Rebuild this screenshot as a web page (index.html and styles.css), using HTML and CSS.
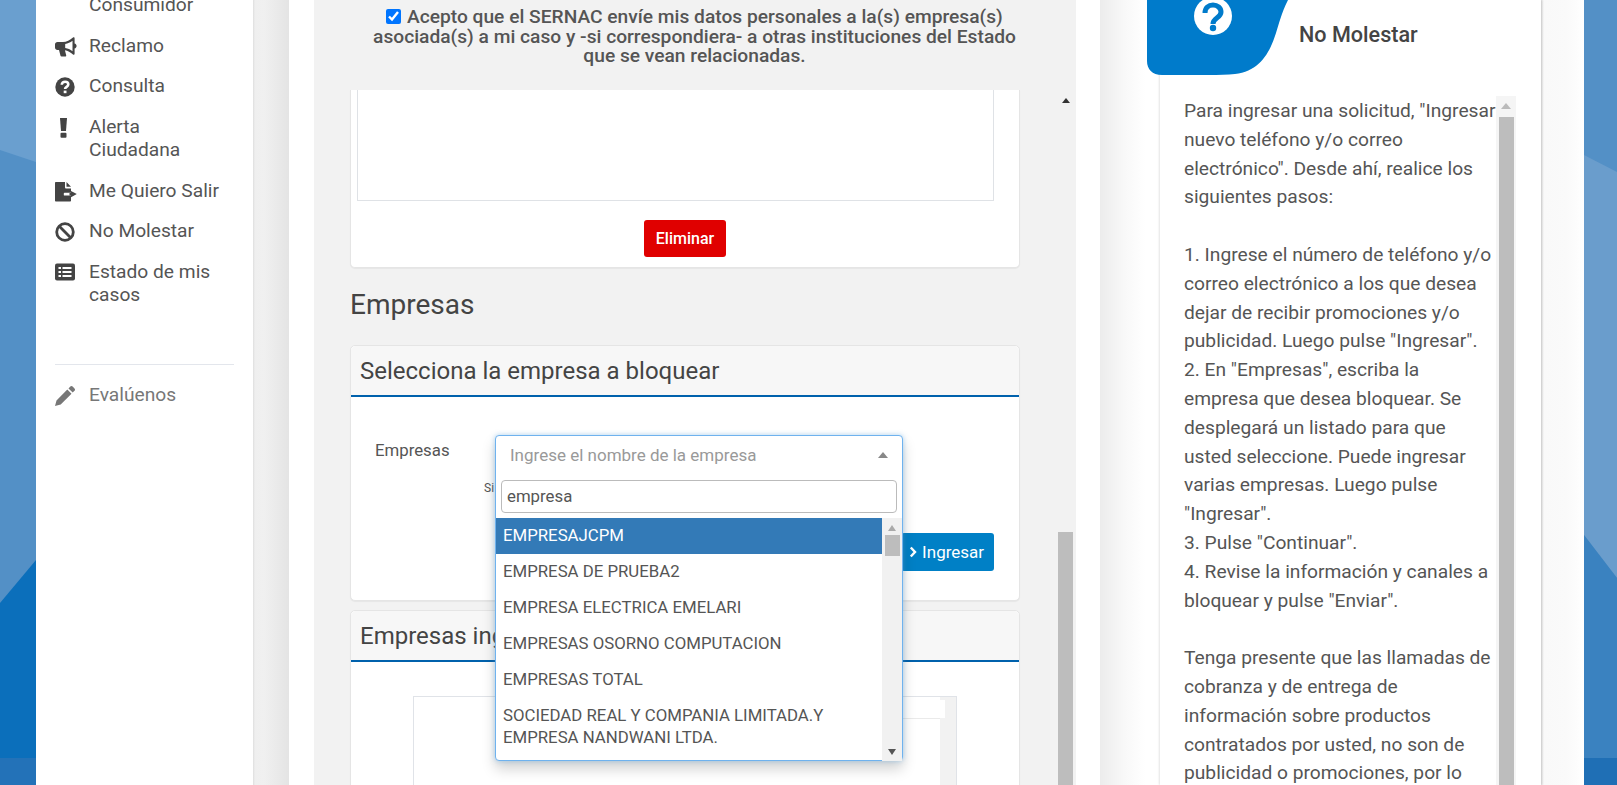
FILE: index.html
```html
<!DOCTYPE html>
<html lang="es">
<head>
<meta charset="utf-8">
<title>No Molestar</title>
<link rel="stylesheet" href="styles.css">
</head>
<body>
<div class="page">
  <div class="edge edge-left">
    <svg viewBox="0 0 36 785" preserveAspectRatio="none" aria-hidden="true">
      <rect width="36" height="785" fill="#5390c6"/>
      <polygon points="0,0 36,0 36,162 0,150" fill="#6a9fcf"/>
      <polygon points="0,603 36,560 36,758 0,758" fill="#0b6fbb"/>
      <rect y="758" width="36" height="27" fill="#2372b8"/>
    </svg>
  </div>

  <nav class="sidebar">
    <ul class="menu">
      <li class="menu-item"><span class="menu-icon"></span><span>Consumidor</span></li>
      <li class="menu-item">
        <span class="menu-icon"><svg width="23" height="20" viewBox="0 0 23 20"><path fill="#444" d="M0 7.5C0 6 1 5 2.5 5H8c3.5 0 7-1.8 10-4.5.6-.5 1.600-.2 1.600.7v5.300c1.200.3 2 1.300 2 2.500s-.8 2.200-2 2.500v5.300c0 .9-1 1.200-1.600.7-2.500-2.300-5.300-3.800-8.100-4.300l1.300 5c.2.700-.3 1.300-1 1.300H6.500c-.5 0-.9-.3-1-.8L4 13H2.500C1 13 0 12 0 10.500zM17.500 3.800C15.300 5.500 12.800 6.600 10.200 7v4c2.600.4 5.100 1.500 7.300 3.200z"/></svg></span>
        <span>Reclamo</span>
      </li>
      <li class="menu-item">
        <span class="menu-icon"><svg width="20" height="20" viewBox="0 0 20 20"><circle cx="10" cy="10" r="9.700" fill="#444"/><path fill="none" stroke="#fff" stroke-width="2.600" d="M6.800 7.800c0-1.900 1.400-3 3.300-3s3.200 1.100 3.200 2.700c0 2.400-3.200 2.300-3.200 4.500"/><rect x="8.700" y="13.600" width="2.800" height="2.600" fill="#fff"/></svg></span>
        <span>Consulta</span>
      </li>
      <li class="menu-item">
        <span class="menu-icon"><svg width="20" height="20" viewBox="0 0 20 20"><path fill="#444" d="M5 0h7l-1 13H6z"/><rect x="5.500" y="14.800" width="6" height="5" rx="1" fill="#444"/></svg></span>
        <span>Alerta<br>Ciudadana</span>
      </li>
      <li class="menu-item">
        <span class="menu-icon"><svg width="23" height="20" viewBox="0 0 23 20"><path fill="#444" d="M0 .8C0 .3.3 0 .8 0H10v5.500c0 .5.400.9.900.9h5.100v4.300H9.500c-.4 0-.7.300-.7.700v1.500c0 .4.300.7.700.7H16v5.100c0 .5-.3.800-.8.800H.8c-.5 0-.8-.3-.8-.8zM11.500 0l4.500 4.800h-4.500zM16 9l5.800 3-5.800 3.200v-2h-1.500v-2.200H16z"/></svg></span>
        <span>Me Quiero Salir</span>
      </li>
      <li class="menu-item">
        <span class="menu-icon"><svg width="20" height="20" viewBox="0 0 20 20"><circle cx="10" cy="10" r="8.300" fill="none" stroke="#444" stroke-width="2.800"/><path stroke="#444" stroke-width="2.800" d="M4.300 4.300l11.400 11.400"/></svg></span>
        <span>No Molestar</span>
      </li>
      <li class="menu-item">
        <span class="menu-icon"><svg width="20" height="18" viewBox="0 0 20 18"><rect y=".5" width="20" height="17" rx="2" fill="#444"/><path stroke="#fff" stroke-width="2" d="M3.500 5h2.500M7.500 5h9M3.500 9h2.500M7.500 9h9M3.500 13h2.500M7.500 13h9"/></svg></span>
        <span>Estado de mis<br>casos</span>
      </li>
    </ul>
    <hr class="menu-rule">
    <div class="menu-item menu-item-muted">
      <span class="menu-icon"><svg width="20" height="20" viewBox="0 0 20 20"><path fill="#777" d="M0 20l1.500-5.600L12.300 3.600l4.200 4.200L5.700 18.500zM13.500 2.400L15.300.6c.7-.7 1.700-.7 2.300 0l1.900 1.900c.7.700.7 1.700 0 2.300l-1.800 1.800z"/></svg></span>
      <span>Evalúenos</span>
    </div>
  </nav>

  <div class="gutter gutter-left"></div>

  <main class="main">
    <div class="column">
      <header class="consent">
        <label class="consent-text"><input type="checkbox" class="consent-box" checked> Acepto que el SERNAC envíe mis datos personales a la(s) empresa(s) asociada(s) a mi caso y -si correspondiera- a otras instituciones del Estado que se vean relacionadas.</label>
      </header>
      <div class="scroller">
        <div class="content">
          <section class="file-card">
            <div class="file-box"></div>
            <div class="file-actions"><button class="btn btn-red" type="button">Eliminar</button></div>
          </section>

          <h2 class="section-title">Empresas</h2>

          <section class="panel panel-select">
            <h3 class="panel-head">Selecciona la empresa a bloquear</h3>
            <div class="panel-body">
              <div class="form-row">
                <span class="form-label">Empresas</span>
              </div>
              <span class="hint">Si</span>
              <div class="form-actions">
                <button class="btn btn-blue" type="button"><svg width="9" height="12" viewBox="0 0 9 12"><path fill="none" stroke="#fff" stroke-width="2.400" d="M1.800 1.500L6 6l-4.200 4.500"/></svg> Ingresar</button>
              </div>
              <div class="combo">
                <div class="combo-head">
                  <span>Ingrese el nombre de la empresa</span>
                  <i class="caret caret-up"></i>
                </div>
                <div class="combo-search"><input class="combo-input" type="text" value="empresa"></div>
                <div class="combo-list">
                  <ul class="options">
                    <li class="option option-active">EMPRESAJCPM</li>
                    <li class="option">EMPRESA DE PRUEBA2</li>
                    <li class="option">EMPRESA ELECTRICA EMELARI</li>
                    <li class="option">EMPRESAS OSORNO COMPUTACION</li>
                    <li class="option">EMPRESAS TOTAL</li>
                    <li class="option">SOCIEDAD REAL Y COMPANIA LIMITADA.Y EMPRESA NANDWANI LTDA.</li>
                  </ul>
                  <div class="combo-scroll">
                    <i class="caret caret-up caret-small"></i>
                    <i class="combo-thumb"></i>
                    <i class="caret caret-down caret-small"></i>
                  </div>
                </div>
              </div>
            </div>
          </section>

          <section class="panel panel-added">
            <h3 class="panel-head">Empresas ingresadas</h3>
            <div class="panel-body panel-body-added">
              <div class="table-box">
                <div class="table-main"><div class="table-top"></div></div>
                <div class="table-side"><span class="table-tab"></span></div>
              </div>
            </div>
          </section>
        </div>
        <div class="main-scroll">
          <i class="caret caret-up caret-dark"></i>
          <i class="main-thumb"></i>
        </div>
      </div>
    </div>
  </main>

  <div class="gutter gutter-right"></div>

  <aside class="help">
    <div class="help-head">
      <svg class="help-tab" width="141" height="75" viewBox="0 0 141 75" aria-hidden="true">
        <path fill="#007bcb" d="M0 0H141C134 14 132 24 129 33C123 52 113 71 88 74C70 75.500 40 75 15 75C5 75 0 69 0 61Z"/>
        <circle cx="66" cy="16" r="19" fill="#fff"/>
        <path fill="none" stroke="#007bcb" stroke-width="5" d="M58 13c0-5 3.500-8 8-8s8 3 8 7c0 6-8 5.500-8 12"/>
        <circle cx="66" cy="28" r="3.200" fill="#007bcb"/>
      </svg>
      <span class="help-title">No Molestar</span>
    </div>
    <div class="help-body">
      <div class="help-text">
        Para ingresar una solicitud, "Ingresar nuevo teléfono y/o correo electrónico". Desde ahí, realice los siguientes pasos:<br><br>
        1. Ingrese el número de teléfono y/o correo electrónico a los que desea dejar de recibir promociones y/o publicidad. Luego pulse "Ingresar".<br>
        2. En "Empresas", escriba la empresa que desea bloquear. Se desplegará un listado para que usted seleccione. Puede ingresar varias empresas. Luego pulse "Ingresar".<br>
        3. Pulse "Continuar".<br>
        4. Revise la información y canales a bloquear y pulse "Enviar".<br><br>
        Tenga presente que las llamadas de cobranza y de entrega de información sobre productos contratados por usted, no son de publicidad o promociones, por lo
      </div>
      <div class="help-scroll">
        <i class="caret caret-up caret-light"></i>
        <i class="help-thumb"></i>
      </div>
    </div>
  </aside>

  <div class="gutter gutter-far"></div>

  <div class="edge edge-right">
    <svg viewBox="0 0 33 785" preserveAspectRatio="none" aria-hidden="true">
      <rect width="33" height="785" fill="#5390c6"/>
      <polygon points="0,155 33,172 33,578 0,535" fill="#6a9dcc"/>
      <polygon points="0,535 33,578 33,758 0,758" fill="#3a82c0"/>
      <rect y="758" width="33" height="27" fill="#1f6fb5"/>
    </svg>
  </div>
</div>
</body>
</html>
```
FILE: styles.css
```css
* { box-sizing: border-box; }
html, body { margin: 0; height: 100%; overflow: hidden; }
body { font-family: Roboto, "Liberation Sans", sans-serif; color: #555; background: #fff; }
ul { list-style: none; margin: 0; padding: 0; }
i { display: block; }

.page { display: flex; width: 1617px; height: 785px; overflow: hidden; }

.edge { flex: none; height: 100%; }
.edge svg { display: block; width: 100%; height: 100%; }
.edge-left { width: 36px; }
.edge-right { width: 33px; }

/* Sidebar */
.sidebar { flex: none; width: 217px; background: #fff; padding: 0 19px; overflow: hidden; }
.menu { margin-top: -7px; }
.menu-item { display: flex; font-size: 19.200px; line-height: 23px; color: #555; margin-bottom: 17.700px; }
.menu-icon { flex: none; width: 34px; display: flex; align-items: flex-start; padding-top: 3px; }
.menu-icon svg { display: block; }
.menu-rule { border: 0; border-top: 1px solid #e3e6ec; margin: 58px -1px 18px 0; width: 179px; }
.menu-item-muted { color: #777; }

.gutter { flex: none; height: 100%; }
.gutter-left { width: 36px; background: linear-gradient(90deg, #dedede 0, #efefef 2px, #f0f0f0 30%, #e4e4e4 100%); }
.gutter-right { width: 60px; background: linear-gradient(90deg, #ececec 0, #f8f8f8 40%, #fff 75%); }
.gutter-far { width: 43px; background: linear-gradient(90deg, #e4e4e4 0, #f9f9f9 3px, #fafafa 60%, #fff 100%); }

/* Main */
.main { flex: none; width: 811px; background: #fff; padding: 0 24px 0 25px; }
.column { display: flex; flex-direction: column; height: 100%; background: #f2f2f2; }
.consent { flex: none; height: 90px; padding: 7px 53px 0 52px; text-align: center; background: #f2f2f2; }
.consent-text { font-size: 19.200px; line-height: 19.500px; font-weight: 500; color: #555; display: block; }
.consent-box { width: 15px; height: 15px; margin: 0 1px 0 0; vertical-align: -1px; accent-color: #0075ff; }

.scroller { flex: 1; display: flex; min-height: 0; }
.content { flex: none; width: 744px; padding-left: 36px; overflow: hidden; }

.file-card { width: 670px; height: 178px; background: #fff; border: 1px solid #e5e5e5; border-top: 0; border-radius: 0 0 5px 5px; padding: 0 6px 0 6px; box-shadow: 0 1px 1px rgba(0,0,0,.05); }
.file-box { width: 637px; height: 111px; border: 1px solid #dfe2e6; border-top: 0; }
.file-actions { display: flex; justify-content: center; margin-top: 19px; }

.btn { font-family: inherit; border: 0; color: #fff; font-size: 16px; border-radius: 3px; cursor: pointer; }
.btn-red { width: 82px; height: 37px; background: #e00000; padding: 0; font-weight: 500; }
.btn-blue { width: 93px; height: 38px; background: #0080c6; font-size: 17px; padding: 0 2px 0 0; }
.btn-blue svg { vertical-align: 0; }

.section-title { font-size: 28px; font-weight: 400; line-height: 32px; color: #444; margin: 21px 0 24px; }

.panel { width: 670px; background: #fff; border: 1px solid #e5e5e5; border-radius: 5px; box-shadow: 0 1px 1px rgba(0,0,0,.05); }
.panel-head { margin: 0; height: 51px; padding: 2px 9px 0; background: #f7f7f7; border-bottom: 2px solid #0061ac; font-size: 24px; line-height: 47px; font-weight: 400; color: #444; border-radius: 5px 5px 0 0; }
.panel-select { height: 256px; margin-bottom: 9px; }
.panel-body { position: relative; padding: 0; }
.form-row { padding: 43px 0 0 24px; }
.form-label { font-size: 16.800px; line-height: 20px; color: #555; }
.hint { position: absolute; left: 133px; top: 84px; font-size: 12px; line-height: 14px; color: #555; }
.form-actions { display: flex; justify-content: flex-end; padding: 73px 25px 0 0; }

.combo { position: absolute; left: 144px; top: 38px; width: 408px; height: 326px; background: #fff; border: 1px solid #6fb2ee; border-radius: 4px; box-shadow: 0 0 5px rgba(102,175,233,.5), 0 8px 14px rgba(0,0,0,.18); z-index: 5; }
.combo-head { height: 40px; display: flex; align-items: center; justify-content: space-between; padding: 0 14px 2px 14px; font-size: 17px; color: #999; }
.combo-search { padding: 4px 5px 0; height: 42px; }
.combo-input { width: 100%; height: 33px; border: 1px solid #bbb; border-radius: 4px; font: 16.800px Roboto, sans-serif; color: #555; padding: 0 5px 2px; outline: 0; }
.combo-list { display: flex; height: 243px; position: relative; }
.options { flex: 1; min-width: 0; }
.option { padding: 6px 7px 8px; font-size: 16.800px; line-height: 22px; color: #555; }
.option-active { background: #337ab7; color: #fff; }
.combo-scroll { flex: none; width: 20px; background: #f1f1f1; display: flex; flex-direction: column; align-items: center; padding-top: 7px; }
.combo-thumb { width: 15px; height: 21px; background: #bdbdbd; margin-top: 4px; }
.caret-down { margin-top: auto; margin-bottom: 6px; }

.caret { width: 0; height: 0; border-left: 5px solid transparent; border-right: 5px solid transparent; }
.caret-up { border-bottom: 6px solid #888; }
.caret-down { border-top: 6px solid #555; }
.caret-small { border-left-width: 4px; border-right-width: 4px; border-bottom-color: #aaa; }
.caret-down.caret-small { border-top-color: #555; }
.caret-dark { border-bottom-color: #333; border-left-width: 4px; border-right-width: 4px; border-bottom-width: 5px; }
.caret-light { border-bottom-color: #bbb; }

.panel-added { height: 300px; }
.panel-body-added { padding: 34px 30px 0 62px; }
.table-box { display: flex; width: 544px; height: 200px; border: 1px solid #e0e3e8; background: #fff; }
.table-main { flex: 1; min-width: 0; }
.table-top { height: 22px; margin-left: 100px; border-bottom: 1px solid #eaeaea; }
.table-side { flex: none; width: 16px; background: #f2f2f2; padding-top: 3px; }
.table-tab { display: block; width: 5px; height: 18px; background: #fff; }

.main-scroll { flex: none; width: 15px; position: relative; display: flex; flex-direction: column; align-items: center; padding-top: 8px; }
.main-thumb { position: absolute; left: 0; top: 442px; width: 15px; height: 400px; background: #bdbdbd; }

/* Help panel */
.help { flex: none; width: 381px; height: 100%; background: #fff; position: relative; box-shadow: -1px 0 2px rgba(0,0,0,.1), 1px 0 2px rgba(0,0,0,.12); }
.help-head { height: 96px; position: relative; padding: 23px 0 0 139px; }
.help-tab { position: absolute; left: -13px; top: 0; }
.help-title { font-size: 21.600px; line-height: 24px; font-weight: 500; color: #444; }
.help-body { display: flex; padding-left: 24px; }
.help-text { flex: none; width: 312px; margin-top: 1px; font-size: 19.200px; line-height: 28.800px; color: #555; }
.help-scroll { flex: none; width: 20px; height: 700px; background: #f5f5f5; display: flex; flex-direction: column; align-items: center; padding-top: 7px; }
.help-thumb { width: 15px; flex: 1; margin-top: 8px; background: #bdbdbd; }
```
